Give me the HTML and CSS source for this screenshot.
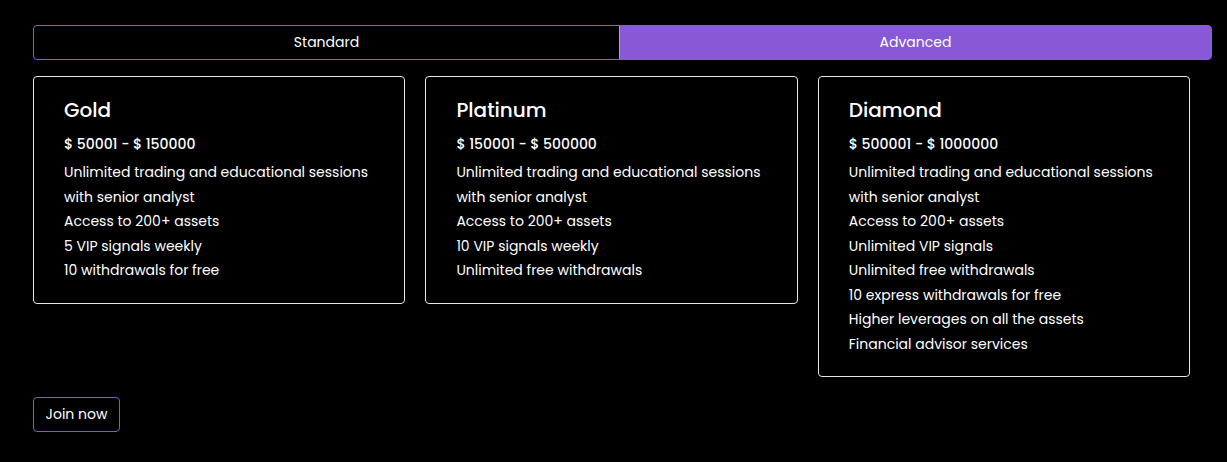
FILE: index.html
```html
<!DOCTYPE html>
<html>
<head>
<meta charset="utf-8">
<link rel="stylesheet" href="styles.css">
</head>
<body>
<div class="page">
  <div class="tabs">
    <div class="tab">Standard</div>
    <div class="tab active">Advanced</div>
  </div>
  <div class="cards">
    <div class="card">
      <div class="title">Gold</div>
      <div class="price">$ 50001 - $ 150000</div>
      <ul class="features">
        <li>Unlimited trading and educational sessions with senior analyst</li>
        <li>Access to 200+ assets</li>
        <li>5 VIP signals weekly</li>
        <li>10 withdrawals for free</li>
      </ul>
    </div>
    <div class="card">
      <div class="title">Platinum</div>
      <div class="price">$ 150001 - $ 500000</div>
      <ul class="features">
        <li>Unlimited trading and educational sessions with senior analyst</li>
        <li>Access to 200+ assets</li>
        <li>10 VIP signals weekly</li>
        <li>Unlimited free withdrawals</li>
      </ul>
    </div>
    <div class="card">
      <div class="title">Diamond</div>
      <div class="price">$ 500001 - $ 1000000</div>
      <ul class="features">
        <li>Unlimited trading and educational sessions with senior analyst</li>
        <li>Access to 200+ assets</li>
        <li>Unlimited VIP signals</li>
        <li>Unlimited free withdrawals</li>
        <li>10 express withdrawals for free</li>
        <li>Higher leverages on all the assets</li>
        <li>Financial advisor services</li>
      </ul>
    </div>
  </div>
  <div class="actions">
    <button class="join">Join now</button>
  </div>
</div>
</body>
</html>
```

FILE: styles.css
```css
* { box-sizing: border-box; }
html, body {
  margin: 0;
  padding: 0;
  background: #000;
}
body {
  font-family: Poppins, "Open Sans", "DejaVu Sans", sans-serif;
  color: #fff;
}
.page {
  padding: 25px 15px 0 33px;
}
.tabs {
  display: grid;
  grid-template-columns: 585px 1fr;
  width: 1179px;
  height: 35px;
  border: 1px solid #8a5ad8;
  border-radius: 4px;
  overflow: hidden;
}
.tab {
  display: flex;
  align-items: center;
  justify-content: center;
  font-size: 14px;
  color: #fff;
}
.tab.active {
  background: #8759d6;
  border: 1px solid #d486e0;
  border-radius: 0 4px 4px 0;
  margin: -1px -1px -1px 0;
}
.cards {
  display: grid;
  grid-template-columns: repeat(3, 372.4px);
  column-gap: 20px;
  align-items: start;
  margin-top: 16px;
}
.card {
  border: 1px solid #e6e6e6;
  border-radius: 4px;
  padding: 18px 30px 20px 30px;
}
.title {
  font-size: 20px;
  font-weight: 500;
  line-height: 30px;
}
.price {
  font-size: 14px;
  font-weight: 500;
  line-height: 21px;
  margin-top: 9px;
}
.features {
  list-style: none;
  margin: 5px 0 0;
  padding: 0;
  font-size: 14px;
  line-height: 24.5px;
}
.actions {
  margin-top: 20px;
}
.join {
  font-family: inherit;
  font-size: 14px;
  color: #fff;
  background: #000;
  border: 1px solid #7b5fc4;
  border-radius: 4px;
  height: 35px;
  width: 87px;
  padding: 0;
}
```
